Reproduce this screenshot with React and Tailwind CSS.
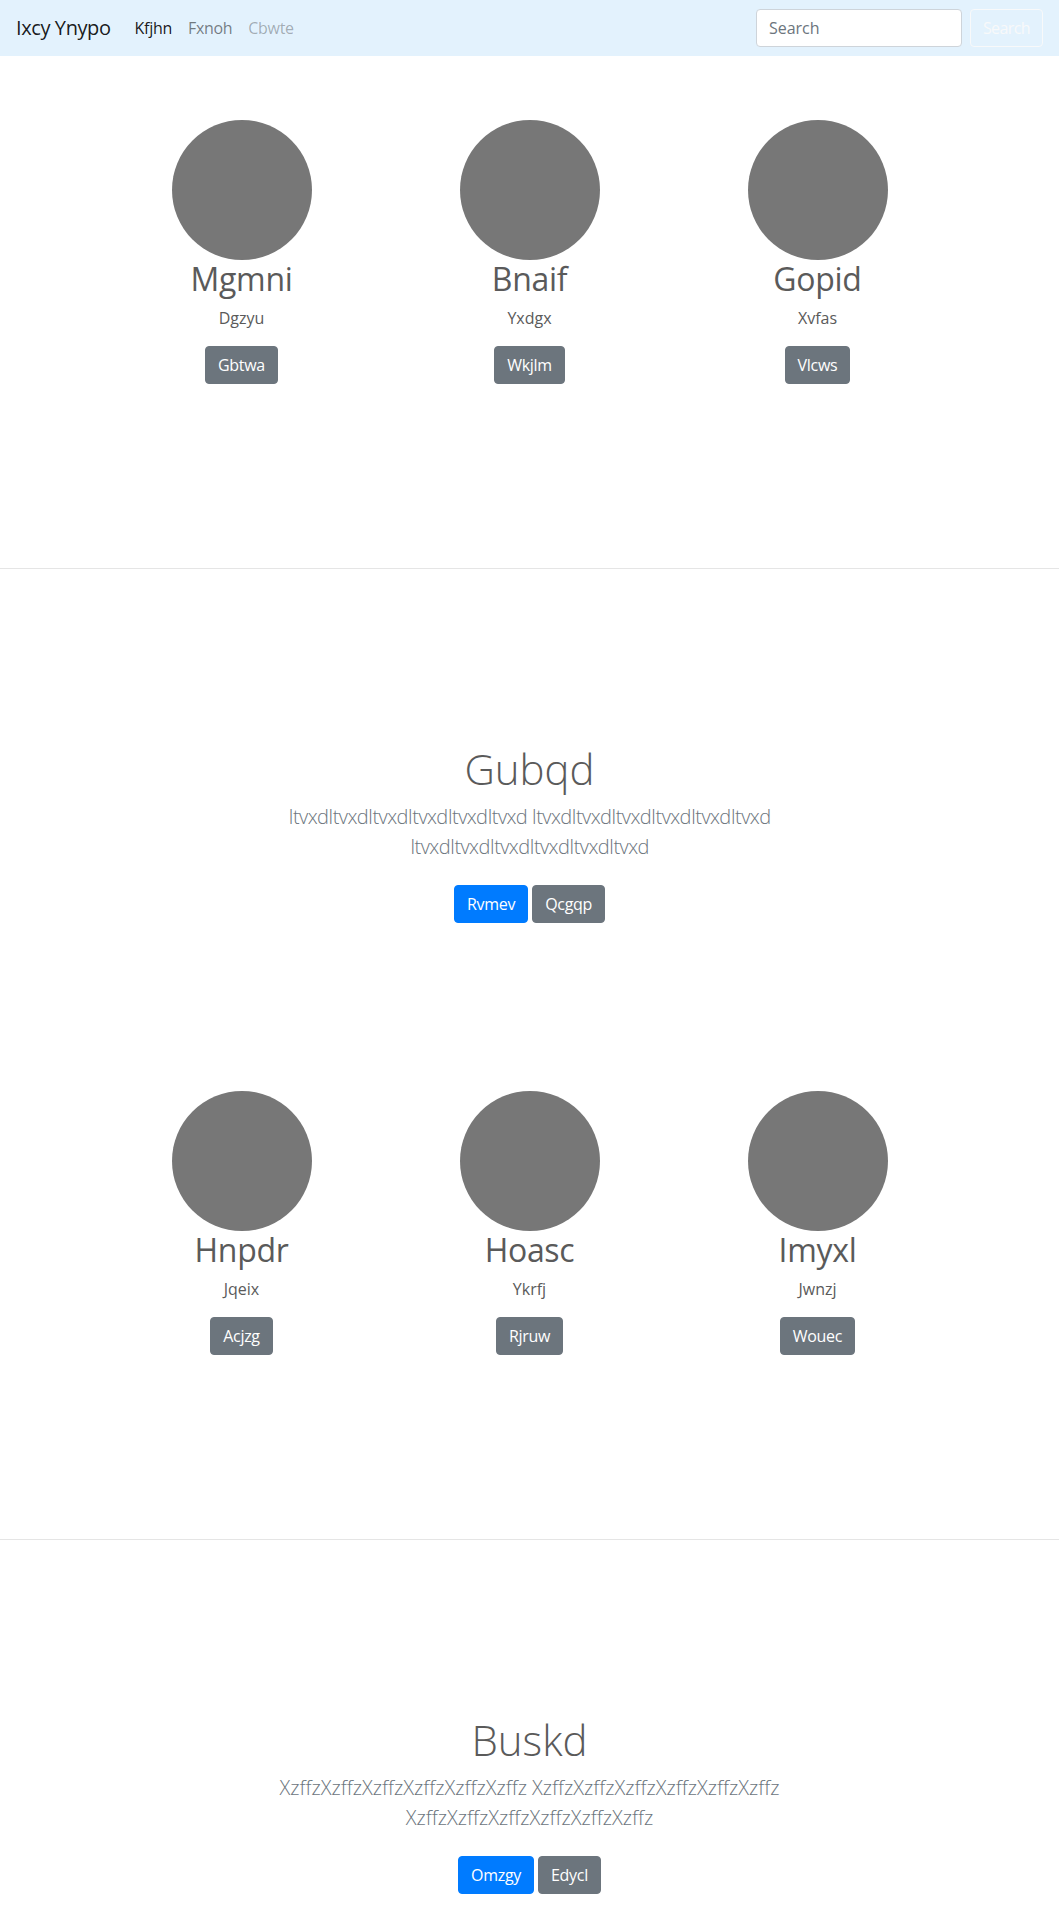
import React from "react";

const rowOne = [
  { name: "Mgmni", sub: "Dgzyu", btn: "Gbtwa" },
  { name: "Bnaif", sub: "Yxdgx", btn: "Wkjlm" },
  { name: "Gopid", sub: "Xvfas", btn: "Vlcws" },
];

const rowTwo = [
  { name: "Hnpdr", sub: "Jqeix", btn: "Acjzg" },
  { name: "Hoasc", sub: "Ykrfj", btn: "Rjruw" },
  { name: "Imyxl", sub: "Jwnzj", btn: "Wouec" },
];

function Navbar() {
  return (
    <nav className="h-[56px] bg-[#e3f2fd] flex items-center px-4">
      <a className="text-[20px] leading-[30px] text-black/90 mr-4 tracking-[-0.4px]">Ixcy Ynypo</a>
      <ul className="flex items-center tracking-[-0.3px]">
        <li className="px-2 text-black/90">Kfjhn</li>
        <li className="px-2 text-black/50">Fxnoh</li>
        <li className="px-2 text-black/30">Cbwte</li>
      </ul>
      <form className="ml-auto flex items-center">
        <input
          type="text"
          placeholder="Search"
          className="w-[206px] h-[38px] px-3 bg-white border border-[#ced4da] rounded text-[16px] placeholder:text-[#6c757d] outline-none mr-2"
        />
        <button
          type="button"
          className="h-[38px] px-3 border border-[#f8f9fa] rounded text-[#f8f9fa] text-[16px] tracking-[-0.6px]"
        >
          Search
        </button>
      </form>
    </nav>
  );
}

function Card({ item }) {
  return (
    <div className="flex flex-col items-center text-center">
      <div className="w-[140px] h-[140px] rounded-full bg-[#777777]" />
      <h2 className="text-[32px] leading-[1.2] mb-2 tracking-[-0.3px]">{item.name}</h2>
      <p className="text-[16px] leading-6 mb-4">{item.sub}</p>
      <button type="button" className="bg-[#6c757d] text-white px-3 py-[6px] text-[16px] leading-6 rounded border border-[#6c757d] tracking-[-0.3px]">
        {item.btn}
      </button>
    </div>
  );
}

function CardRow({ items }) {
  return (
    <section className="h-[513px] pt-[64px] border-b border-[#e5e5e5]">
      <div className="w-[864px] mx-auto grid grid-cols-3">
        {items.map((it) => (
          <Card key={it.name} item={it} />
        ))}
      </div>
    </section>
  );
}

function Hero({ title, word, primary, secondary, leadClass }) {
  const line = word.repeat(6);
  return (
    <section className="h-[458px] pt-[175px] text-center">
      <h1 className="text-[42px] leading-[1.2] font-light mb-2">{title}</h1>
      <p className={`max-w-[610px] mx-auto text-[20px] leading-[30px] font-light text-[#6c757d] mb-[23px] ${leadClass}`}>
        {line} {line} {line}
      </p>
      <div className="flex justify-center gap-1">
        <button type="button" className="bg-[#007bff] border border-[#007bff] text-white px-3 py-[6px] text-[16px] leading-6 rounded tracking-[-0.3px]">
          {primary}
        </button>
        <button type="button" className="bg-[#6c757d] border border-[#6c757d] text-white px-3 py-[6px] text-[16px] leading-6 rounded tracking-[-0.3px]">
          {secondary}
        </button>
      </div>
    </section>
  );
}

export default function App() {
  return (
    <div className="font-['Open_Sans',sans-serif] text-[#5a5a5a] bg-white">
      <Navbar />
      <CardRow items={rowOne} />
      <Hero title="Gubqd" word="Itvxd" primary="Rvmev" secondary="Qcgqp" leadClass="tracking-[-0.6px]" />
      <CardRow items={rowTwo} />
      <Hero title="Buskd" word="Xzffz" primary="Omzgy" secondary="Edycl" leadClass="tracking-normal" />
    </div>
  );
}
